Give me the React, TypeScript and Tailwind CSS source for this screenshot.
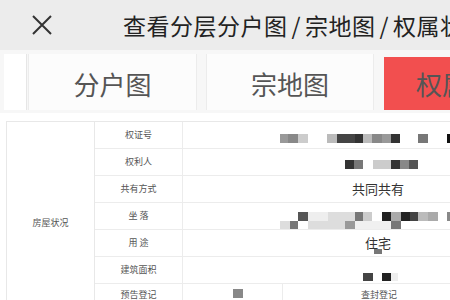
import React from 'react';

type Block = [number, number, number, number, string];

const font = { fontFamily: '"Noto Sans CJK SC", "Noto Sans", sans-serif' };

// pixelated (mosaic) values, drawn as rectangles inside the value cell
const mosaic: Record<number, Block[]> = {
  0: [
    [97, 12, 8, 9, '#999'], [105, 12, 10, 9, '#888'], [115, 12, 10, 9, '#ccc'],
    [144, 12, 10, 9, '#bbb'], [154, 12, 18, 9, '#444'], [172, 12, 8, 9, '#333'],
    [180, 12, 9, 9, '#bbb'], [189, 12, 10, 9, '#888'], [199, 12, 9, 9, '#999'],
    [208, 12, 9, 9, '#333'], [235, 12, 10, 9, '#777'], [264, 12, 9, 9, '#111'],
  ],
  1: [
    [162, 11, 9, 9, '#333'], [171, 11, 9, 9, '#777'], [190, 11, 18, 9, '#ccc'],
    [208, 11, 9, 9, '#333'], [217, 11, 9, 9, '#888'], [226, 11, 9, 9, '#555'],
  ],
  3: [
    [115, 9, 10, 9, '#555'], [125, 9, 20, 9, '#eee'], [145, 9, 27, 9, '#ddd'],
    [172, 9, 8, 9, '#777'], [180, 9, 9, 9, '#ccc'], [199, 9, 9, 9, '#222'],
    [208, 9, 10, 9, '#aaa'], [218, 9, 9, 9, '#222'], [227, 9, 8, 9, '#444'],
    [235, 9, 10, 9, '#bbb'], [245, 9, 10, 9, '#aaa'], [264, 9, 9, 9, '#888'],
    [97, 18, 10, 8, '#ddd'], [107, 18, 8, 8, '#777'], [125, 18, 37, 8, '#ddd'],
    [162, 18, 10, 8, '#999'], [172, 18, 36, 8, '#f0f0f0'], [208, 18, 10, 8, '#777'],
  ],
  4: [[191, 19, 8, 5, '#777']],
  5: [[180, 16, 10, 8, '#444'], [199, 16, 9, 8, '#222'], [208, 16, 7, 8, '#eee']],
};

const rows = [
  { label: '权证号', value: '' },
  { label: '权利人', value: '' },
  { label: '共有方式', value: '共同共有' },
  { label: '坐 落', value: '' },
  { label: '用 途', value: '住宅' },
  { label: '建筑面积', value: '' },
];

function Mosaic({ blocks }: { blocks: Block[] }) {
  return (
    <svg className="absolute inset-0 pointer-events-none" width="390" height="27">
      {blocks.map(([x, y, w, h, c], i) => (
        <rect key={i} x={x} y={y} width={w} height={h} fill={c} />
      ))}
    </svg>
  );
}

export default function App() {
  return (
    <div className="w-[450px] h-[300px] overflow-hidden bg-white" style={font}>
      {/* Top bar */}
      <div className="h-[50px] bg-[#ececec] flex items-center whitespace-nowrap overflow-hidden">
        <svg className="ml-[32px] shrink-0" width="20" height="20" viewBox="0 0 20 20">
          <path d="M1 1 L19 19 M19 1 L1 19" stroke="#333" strokeWidth="2" />
        </svg>
        <span className="ml-[71px] text-[23px] text-[#222] leading-none tracking-[0.5px]">
          查看分层分户图<span className="px-[4px]">/</span>宗地图<span className="px-[4px]">/</span>权属状况
        </span>
      </div>

      {/* Tabs */}
      <div className="h-[63px] bg-[#f7f7f7] pt-[4px] flex whitespace-nowrap">
        <div className="ml-[4px] w-[23px] h-[56px] shrink-0 bg-white border-r border-[#e6e6e6]" />
        <div className="ml-[1px] w-[169px] h-[56px] shrink-0 bg-[#fcfcfc] border-x border-[#ececec] flex items-center justify-center pt-[3px] text-[26px] text-[#555]">
          分户图
        </div>
        <div className="ml-[9px] w-[168px] h-[56px] shrink-0 bg-[#fcfcfc] border-x border-[#ececec] flex items-center justify-center pt-[3px] text-[26px] text-[#555]">
          宗地图
        </div>
        <div className="ml-[10px] w-[168px] h-[53px] mt-[3px] shrink-0 bg-[#f24f4f] flex items-center justify-center text-[26px] text-[#555]">
          权属状况
        </div>
      </div>

      {/* Table */}
      <div className="mt-[8px] ml-[6px] flex border-t border-[#e8e8e8] text-[9px] text-[#555]">
        <div className="w-[89px] h-[202px] shrink-0 border-x border-[#e8e8e8] flex items-center justify-center">
          房屋状况
        </div>
        <div className="flex flex-col">
          {rows.map((r, i) => (
            <div key={r.label} className="flex h-[27px] border-b border-[#ececec]">
              <div className="w-[88px] shrink-0 border-r border-[#ececec] flex items-center justify-center">
                {r.label}
              </div>
              <div className="relative w-[390px] shrink-0 flex items-center justify-center text-[13px] text-[#333]">
                {r.value}
                {mosaic[i] && <Mosaic blocks={mosaic[i]} />}
              </div>
            </div>
          ))}
          <div className="flex h-[27px]">
            <div className="w-[88px] shrink-0 border-r border-[#ececec] flex justify-center pt-[4px]">
              预告登记
            </div>
            <div className="w-[100px] shrink-0 border-r border-[#ececec] pt-[5px] pl-[50px]">
              <div className="w-[10px] h-[9px] bg-[#888]" />
            </div>
            <div className="w-[192px] shrink-0 flex justify-center pt-[4px]">查封登记</div>
          </div>
        </div>
      </div>
    </div>
  );
}
